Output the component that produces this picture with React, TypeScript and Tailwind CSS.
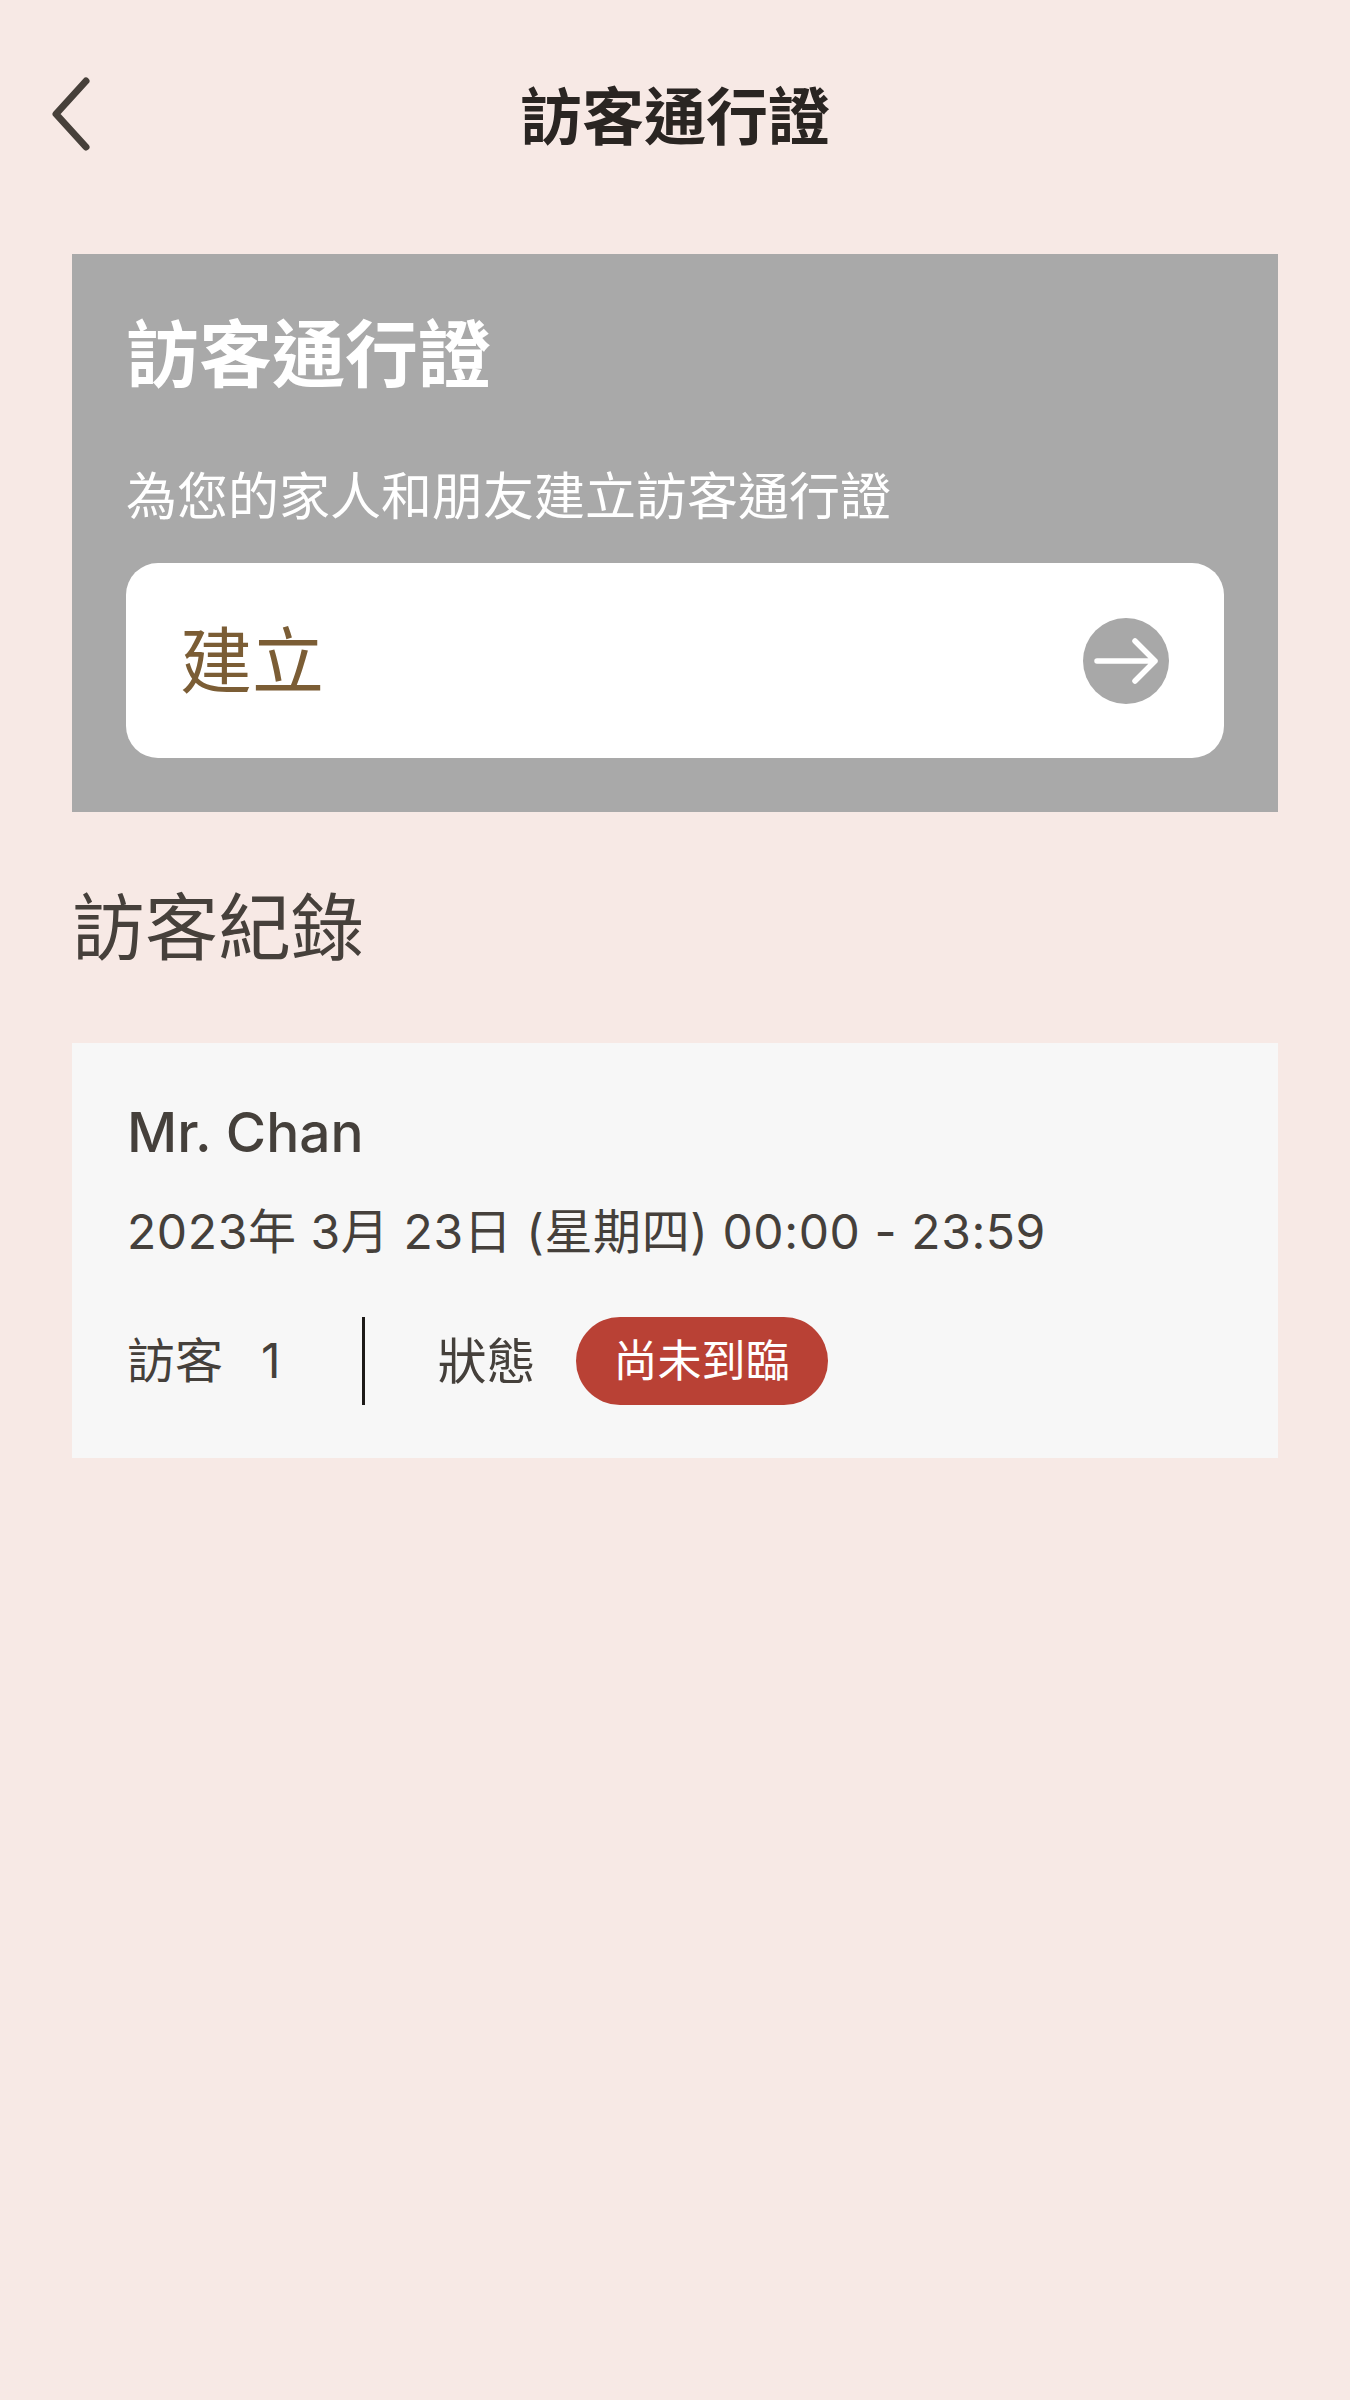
import React from 'react';

const font = { fontFamily: 'Inter, "Noto Sans CJK TC", sans-serif' };

function BackChevron() {
  return (
    <svg width="44" height="76" viewBox="0 0 44 76" fill="none">
      <path d="M36 5 L6 38 L36 71" stroke="#47403a" strokeWidth="7" strokeLinecap="round" strokeLinejoin="round" />
    </svg>
  );
}

function ArrowCircle() {
  return (
    <svg width="86" height="86" viewBox="0 0 86 86" fill="none">
      <circle cx="43" cy="43" r="43" fill="#a8a8a8" />
      <path d="M14 43 H72 M52 23 L72 43 L52 63" stroke="#ffffff" strokeWidth="5.5" strokeLinecap="round" strokeLinejoin="round" />
    </svg>
  );
}

export default function App() {
  return (
    <div className="min-h-[2400px] w-[1350px] bg-[#f7e9e5]" style={font}>
      {/* Header */}
      <div className="grid h-[236px] grid-cols-[1fr_auto_1fr] items-center">
        <div className="-mt-[8px] pl-[50px]">
          <BackChevron />
        </div>
        <h1 className="text-[62px] font-bold leading-none text-[#2a2522]">訪客通行證</h1>
        <div />
      </div>

      <div className="mt-[18px] px-[72px]">
        {/* Visitor pass card */}
        <div className="bg-[#a9a9a9] px-[54px] pb-[54px] pt-[54px]">
          <h2 className="text-[73px] font-semibold leading-[94px] text-white">訪客通行證</h2>
          <p className="mt-[62px] text-[51px] leading-[66px] text-white">為您的家人和朋友建立訪客通行證</p>
          <button className="mt-[33px] flex h-[195px] w-full items-center justify-between rounded-[32px] bg-white pl-[54px] pr-[55px]">
            <span className="text-[72px] leading-none text-[#7b5d35]">建立</span>
            <ArrowCircle />
          </button>
        </div>

        {/* Records */}
        <h3 className="mt-[69px] text-[73px] font-normal leading-[94px] text-[#46403b]">訪客紀錄</h3>

        <div className="mt-[68px] bg-[#f7f7f7] px-[55px] pb-[53px] pt-[55px]">
          <div className="text-[55px] font-medium leading-[68px] text-[#45403b]">Mr. Chan</div>
          <div className="mt-[37px] text-[48px] leading-[58px] tracking-[0.6px] text-[#45403b]">2023年 3月 23日 (星期四) 00:00 - 23:59</div>
          <div className="mt-[56px] flex h-[88px] items-center">
            <span className="text-[48px] leading-none text-[#45403b]">訪客</span>
            <span className="ml-[38px] text-[48px] leading-none text-[#45403b]">1</span>
            <div className="ml-[81px] h-[88px] w-[3px] bg-[#1d1a18]" />
            <span className="ml-[73px] text-[49px] leading-none text-[#45403b]">狀態</span>
            <span className="ml-[40px] flex h-[88px] items-center rounded-full bg-[#b94135] px-[38px] text-[44px] leading-none text-white">
              尚未到臨
            </span>
          </div>
        </div>
      </div>
    </div>
  );
}
